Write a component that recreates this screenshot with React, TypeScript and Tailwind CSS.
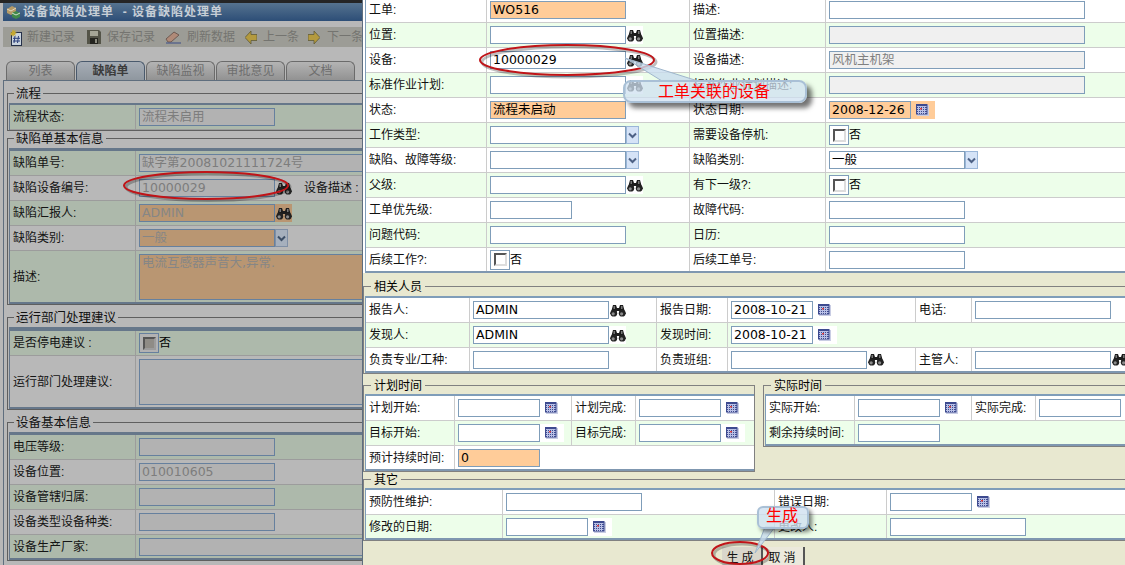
import React from "react";

const FONT = "font-['DejaVu_Sans','Noto_Sans_CJK_SC',sans-serif]";
const LABEL = "font-['Liberation_Sans','Noto_Sans_CJK_SC',sans-serif]";

const TONES: Record<string, string> = {
  white: "bg-white border-[#7f9db9] text-black",
  orange: "bg-[#ffcc99] border-[#7f9db9] text-black",
  disabled: "bg-[#f0f0f0] border-[#7f9db9] text-[#808080]",
  dim: "bg-[#b2b2b2] border-[#66809e] text-[#7d7d7d]",
  dimOrange: "bg-[#b99672] border-[#66809e] text-[#868686]",
};

function Box({ v = "", tone = "white", w = "w-[136px]" }: { v?: string; tone?: string; w?: string }) {
  return (
    <div className={`${w} h-[18px] shrink-0 border px-[2px] overflow-hidden whitespace-nowrap text-[12.5px] leading-[16px] ${FONT} ${TONES[tone]}`}>
      {v}
    </div>
  );
}

function Binoc({ bg = "" }: { bg?: string }) {
  return (
    <div className={`w-[17px] h-[18px] shrink-0 flex items-center justify-center ${bg}`}>
      <svg width="16" height="13" viewBox="0 0 16 13">
        <path d="M3 1h3l1 3h2l1-3h3l1.5 5.5L16 10H9.5V7h-3v3H0l1.5-3.5z" fill="#1c1c1c" />
        <circle cx="3.8" cy="9.2" r="3.4" fill="#222" />
        <circle cx="12.2" cy="9.2" r="3.4" fill="#222" />
        <circle cx="3.2" cy="9.8" r="1.6" fill="#8a8a8a" />
        <circle cx="11.6" cy="9.8" r="1.6" fill="#8a8a8a" />
        <rect x="3.5" y="2" width="1.5" height="3" fill="#777" />
        <rect x="11" y="2" width="1.5" height="3" fill="#777" />
      </svg>
    </div>
  );
}

function Cal({ bg = "" }: { bg?: string }) {
  return (
    <div className={`w-[24px] h-[18px] shrink-0 pl-[5px] flex items-center ${bg}`}>
      <svg width="13" height="12" viewBox="0 0 13 12">
        <rect x="1" y="1" width="12" height="11" fill="#c9cde4" />
        <rect x="0" y="0" width="11.5" height="10.5" fill="#3d4a8f" />
        <path d="M1 2.5h9.5M1 4.5h9.5M1 6.5h9.5M1 8.5h9.5M2.5 2v8M4.5 2v8M6.5 2v8M8.5 2v8" stroke="#b9c0e6" strokeWidth="1" />
        <rect x="4" y="4" width="2" height="1.5" fill="#e04040" />
      </svg>
    </div>
  );
}

function Arrow({ dim = false }: { dim?: boolean }) {
  return (
    <div className={`w-[13px] h-[18px] shrink-0 border flex items-center justify-center ${dim ? "bg-[#a6b0bd] border-[#7f8fa5]" : "bg-[#d5e3f7] border-[#9ab6d8]"}`}>
      <svg width="9" height="7" viewBox="0 0 9 7">
        <path d="M1 1.5l3.5 3.5L8 1.5" fill="none" stroke={dim ? "#3d4f66" : "#4d6185"} strokeWidth="2" />
      </svg>
    </div>
  );
}

function Check({ dim = false }: { dim?: boolean }) {
  return (
    <div className="flex items-center">
      <div className={`w-[20px] h-[20px] border flex items-center justify-center ${dim ? "border-[#66809e] bg-[#b2b2b2]" : "border-[#7f9db9] bg-white"}`}>
        <div className={`w-[13px] h-[13px] border-2 border-t-[#555] border-l-[#555] ${dim ? "bg-[#8f8c86] border-r-[#9c9c9c] border-b-[#9c9c9c]" : "bg-white border-r-[#ddd] border-b-[#ddd]"}`} />
      </div>
      <span className="text-black">否</span>
    </div>
  );
}

function Row({ cols, tone, last, children }: { cols: string; tone: string; last?: string; children: React.ReactNode }) {
  return <div className={`grid ${cols} h-[25px] ${tone} ${last ?? "border-b border-[#cccccc]"}`}>{children}</div>;
}

function Lb({ t, dark = false }: { t: string; dark?: boolean }) {
  return (
    <div className={`flex items-center pl-[3px] border-r whitespace-nowrap overflow-hidden ${dark ? "border-[#9c9c9c]" : "border-[#cccccc]"}`}>
      {t}
    </div>
  );
}

function Val({ children, line = true, dark = false }: { children?: React.ReactNode; line?: boolean; dark?: boolean }) {
  return (
    <div className={`flex items-center pl-[3px] overflow-hidden ${line ? "border-r" : ""} ${dark ? "border-[#9c9c9c]" : "border-[#cccccc]"}`}>
      {children}
    </div>
  );
}

const W = "bg-white";
const G = "bg-[#edfeea]";
const TOP = "grid-cols-[121px_203px_136px_1fr]";
const PEOPLE = "grid-cols-[104px_187px_71px_188px_56px_1fr]";
const PLAN = "grid-cols-[89px_117px_64px_1fr]";
const OTHER = "grid-cols-[137px_272px_112px_1fr]";
const END = "border-b-2 border-[#7f97b0]";

const D1 = "bg-[#adb9ab]";
const D2 = "bg-[#b8b8b8]";
const LCOL = "grid-cols-[126px_1fr]";

function LRow({ t, tone, h = "h-[25px]", last, children }: { t: string; tone: string; h?: string; last?: boolean; children?: React.ReactNode }) {
  return (
    <div className={`grid ${LCOL} ${h} ${tone} ${last ? "border-b-2 border-[#66778a]" : "border-b border-[#9c9c9c]"}`}>
      <Lb t={t} dark />
      <Val dark line={false}>{children}</Val>
    </div>
  );
}

function LSet({ title, mt, tableTop, children }: { title: string; mt: string; tableTop: string; children: React.ReactNode }) {
  return (
    <fieldset className={`${mt} w-[385px] border border-[#5f5f5f] pl-[1px]`}>
      <legend className="ml-[5px] px-[2px] h-[14px] leading-[16px] text-[12.5px] text-[#111]">{title}</legend>
      <div className={`mt-[3px] border-l border-[#66778a] ${tableTop} border-t-[#66778a] bg-[#b8b8b8]`}>{children}</div>
    </fieldset>
  );
}

function RSet({ title, w, mt = "", tableMt = "mt-[2px]", children }: { title: string; w: string; mt?: string; tableMt?: string; children: React.ReactNode }) {
  return (
    <fieldset className={`${w} ${mt} shrink-0 border border-[#808080] pl-[1px]`}>
      <legend className="ml-[6px] px-[3px] h-[14px] leading-[16px] text-[12px] text-black">{title}</legend>
      <div className={`${tableMt} border-l border-t-2 border-[#7f9db9] bg-white`}>{children}</div>
    </fieldset>
  );
}

function Tab({ t, active }: { t: string; active?: boolean }) {
  return (
    <div
      className={`w-[69px] h-[19px] rounded-t-[6px] border border-b-0 flex items-center justify-center text-[12px] bg-gradient-to-b ${
        active ? "border-[#4a5a6d] from-[#a6adb6] to-[#8f979f] text-[#3c3c3c] font-bold" : "border-[#6b6b6b] from-[#b4b4b4] to-[#929292] text-[#6e6e6e]"
      }`}
    >
      {t}
    </div>
  );
}

function Tool({ w, t, children }: { w: string; t: string; children: React.ReactNode }) {
  return (
    <div className={`${w} flex items-center shrink-0 whitespace-nowrap text-[#747470] text-[12px]`}>
      {children}
      <span>{t}</span>
    </div>
  );
}

function Left() {
  return (
    <div className="w-[362px] h-[565px] shrink-0 overflow-hidden bg-[#b8b8b8] text-[12px] text-[#141414]">
      <div className="h-[3px] bg-[#252525]" />
      <div className="ml-[3px] h-[18px] flex items-center bg-gradient-to-b from-[#56738f] to-[#2d4e77] text-[#c6ced6] font-bold tracking-[1px] whitespace-pre">
        <div className="w-[20px] flex justify-center">
          <svg width="15" height="15" viewBox="0 0 15 15">
            <path d="M1 4l5-3 4 2v4l-5 3-4-2z" fill="#b59a66" />
            <path d="M6 8l4-2 4 2v4l-4 2-4-2z" fill="#3f8a4a" />
            <path d="M6 8l4 2 4-2" stroke="#cfe0cf" fill="none" />
            <path d="M1 4l4 2 5-3" stroke="#e0d8c0" fill="none" />
          </svg>
        </div>
        设备缺陷处理单  - 设备缺陷处理单
      </div>
      <div className="ml-[3px] mt-[6px] h-[20px] flex items-center bg-[#9c9c96] pl-[7px]">
        <Tool w="w-[77px]" t="新建记录">
          <div className="w-[17px]">
            <svg width="13" height="17" viewBox="0 0 13 17">
              <rect x="1.5" y="3.5" width="10" height="13" fill="#c9d3dd" stroke="#26314a" />
              <path d="M5 7l-1 7M8.5 7l-1 7M3 9.3h7M3 12h7" stroke="#2a3f7a" />
              <path d="M3 0l1 2 2-1-1 2 2 1-2 1 1 2-2-1-1 2-1-2-2 1 1-2-1-1 2-1z" fill="#c4a832" />
            </svg>
          </div>
        </Tool>
        <Tool w="w-[78px]" t="保存记录">
          <div className="w-[20px]">
            <svg width="14" height="14" viewBox="0 0 14 14">
              <path d="M0 0h12l2 2v12H0z" fill="#545448" />
              <rect x="3" y="1" width="8" height="5" fill="#a5a596" />
              <rect x="3" y="8" width="8" height="6" fill="#24241f" />
              <rect x="8" y="9" width="2" height="4" fill="#8c8c80" />
            </svg>
          </div>
        </Tool>
        <Tool w="w-[80px]" t="刷新数据">
          <div className="w-[22px]">
            <svg width="16" height="13" viewBox="0 0 16 13">
              <path d="M1 8l8-7 5 3-8 7H3z" fill="#b08a78" stroke="#6e5a52" />
              <path d="M1 12h15" stroke="#4a5a8a" strokeWidth="1.2" />
            </svg>
          </div>
        </Tool>
        <Tool w="w-[63px]" t="上一条">
          <div className="w-[18px]">
            <svg width="12" height="13" viewBox="0 0 12 13">
              <path d="M0 6.5L6 0v3.5h6v6H6V13z" fill="#b49a3e" stroke="#5f5a3a" strokeWidth="0.8" />
            </svg>
          </div>
        </Tool>
        <Tool w="w-[70px]" t="下一条">
          <div className="w-[19px]">
            <svg width="12" height="13" viewBox="0 0 12 13">
              <path d="M12 6.5L6 0v3.5H0v6h6V13z" fill="#b49a3e" stroke="#5f5a3a" strokeWidth="0.8" />
            </svg>
          </div>
        </Tool>
      </div>
      <div className="ml-[6px] mt-[14px] flex gap-px">
        <Tab t="列表" />
        <Tab t="缺陷单" active />
        <Tab t="缺陷监视" />
        <Tab t="审批意见" />
        <Tab t="文档" />
      </div>
      <div className="ml-[3px] border-t border-l border-[#5f6e7e] pl-[3px] pt-[5px] h-[485px]">
        <LSet title="流程" mt="" tableTop="border-t-2">
          <LRow t="流程状态:" tone={D1}>
            <Box v="流程未启用" tone="dim" />
          </LRow>
        </LSet>
        <LSet title="缺陷单基本信息" mt="" tableTop="border-t-[3px]">
          <LRow t="缺陷单号:" tone={D1}>
            <Box v="缺字第20081021111724号" tone="dim" w="w-[230px]" />
          </LRow>
          <div className={`grid ${LCOL} h-[25px] ${D2} border-b border-[#9c9c9c]`}>
            <Lb t="缺陷设备编号:" dark />
            <Val dark line={false}>
              <Box v="10000029" tone="dim" />
              <Binoc />
              <span className="ml-[12px] whitespace-nowrap">设备描述 :</span>
            </Val>
          </div>
          <LRow t="缺陷汇报人:" tone={D1}>
            <Box v="ADMIN" tone="dimOrange" />
            <Binoc bg="bg-[#b99672]" />
          </LRow>
          <LRow t="缺陷类别:" tone={D2}>
            <Box v="一般" tone="dimOrange" />
            <Arrow dim />
          </LRow>
          <LRow t="描述:" tone={D1} h="h-[53px]" last>
            <div className={`w-[240px] h-[46px] shrink-0 border px-[2px] text-[12.5px] leading-[16px] ${FONT} ${TONES.dimOrange}`}>
              电流互感器声音大,异常.
            </div>
          </LRow>
        </LSet>
        <LSet title="运行部门处理建议" mt="mt-[5px]" tableTop="border-t-4">
          <LRow t="是否停电建议 :" tone={D1}>
            <Check dim />
          </LRow>
          <LRow t="运行部门处理建议:" tone={D2} h="h-[53px]" last>
            <div className={`w-[240px] h-[46px] shrink-0 border ${TONES.dim}`} />
          </LRow>
        </LSet>
        <LSet title="设备基本信息" mt="mt-[5px]" tableTop="border-t-[3px]">
          <LRow t="电压等级:" tone={D1}>
            <Box tone="dim" />
          </LRow>
          <LRow t="设备位置:" tone={D2}>
            <Box v="010010605" tone="dim" />
          </LRow>
          <LRow t="设备管辖归属:" tone={D1}>
            <Box tone="dim" />
          </LRow>
          <LRow t="设备类型设备种类:" tone={D2}>
            <Box tone="dim" />
          </LRow>
          <LRow t="设备生产厂家:" tone={D1} last>
            <Box tone="dim" w="w-[240px]" />
          </LRow>
        </LSet>
      </div>
    </div>
  );
}

function Right() {
  return (
    <div className="flex-1 h-[565px] overflow-hidden bg-[#e8e8d0] text-[12px] text-[#111] border-l border-[#5f6e7e]">
      <div className="-mt-[2px] pl-[2px] bg-white">
        <div className="border-l border-[#7f9db9]">
          <Row cols={TOP} tone={W}>
            <Lb t="工单:" /><Val><Box v="WO516" tone="orange" /></Val>
            <Lb t="描述:" /><Val line={false}><Box w="w-[256px]" /></Val>
          </Row>
          <Row cols={TOP} tone={G}>
            <Lb t="位置:" /><Val><Box /><Binoc bg="bg-white" /></Val>
            <Lb t="位置描述:" /><Val line={false}><Box w="w-[256px]" tone="disabled" /></Val>
          </Row>
          <Row cols={TOP} tone={W}>
            <Lb t="设备:" /><Val><Box v="10000029" /><Binoc /></Val>
            <Lb t="设备描述:" /><Val line={false}><Box v="风机主机架" w="w-[256px]" tone="disabled" /></Val>
          </Row>
          <Row cols={TOP} tone={G}>
            <Lb t="标准作业计划:" /><Val><Box /><Binoc bg="bg-white" /></Val>
            <Lb t="标准作业计划描述:" /><Val line={false}><Box w="w-[256px]" tone="disabled" /></Val>
          </Row>
          <Row cols={TOP} tone={W}>
            <Lb t="状态:" /><Val><Box v="流程未启动" tone="orange" /></Val>
            <Lb t="状态日期:" /><Val line={false}><Box v="2008-12-26" tone="orange" w="w-[82px]" /><Cal bg="bg-[#ffcc99]" /></Val>
          </Row>
          <Row cols={TOP} tone={G}>
            <Lb t="工作类型:" /><Val><Box /><Arrow /></Val>
            <Lb t="需要设备停机:" /><Val line={false}><Check /></Val>
          </Row>
          <Row cols={TOP} tone={W}>
            <Lb t="缺陷、故障等级:" /><Val><Box /><Arrow /></Val>
            <Lb t="缺陷类别:" /><Val line={false}><Box v="一般" /><Arrow /></Val>
          </Row>
          <Row cols={TOP} tone={G}>
            <Lb t="父级:" /><Val><Box /><Binoc bg="bg-white" /></Val>
            <Lb t="有下一级?:" /><Val line={false}><Check /></Val>
          </Row>
          <Row cols={TOP} tone={W}>
            <Lb t="工单优先级:" /><Val><Box w="w-[82px]" /></Val>
            <Lb t="故障代码:" /><Val line={false}><Box /></Val>
          </Row>
          <Row cols={TOP} tone={G}>
            <Lb t="问题代码:" /><Val><Box /></Val>
            <Lb t="日历:" /><Val line={false}><Box /></Val>
          </Row>
          <Row cols={TOP} tone={W} last={END}>
            <Lb t="后续工作?:" /><Val><Check /></Val>
            <Lb t="后续工单号:" /><Val line={false}><Box /></Val>
          </Row>
        </div>
      </div>
      <div>
        <RSet title="相关人员" w="w-[775px]" mt="mt-[6px]" tableMt="mt-[3px]">
          <Row cols={PEOPLE} tone={W}>
            <Lb t="报告人:" /><Val><Box v="ADMIN" /><Binoc /></Val>
            <Lb t="报告日期:" /><Val><Box v="2008-10-21" w="w-[82px]" /><Cal /></Val>
            <Lb t="电话:" /><Val line={false}><Box /></Val>
          </Row>
          <Row cols={PEOPLE} tone={G}>
            <Lb t="发现人:" /><Val><Box v="ADMIN" /><Binoc bg="bg-white" /></Val>
            <Lb t="发现时间:" /><Val line={false}><Box v="2008-10-21" w="w-[82px]" /><Cal bg="bg-white" /></Val>
            <div /><div />
          </Row>
          <Row cols={PEOPLE} tone={W} last={END}>
            <Lb t="负责专业/工种:" /><Val><Box /></Val>
            <Lb t="负责班组:" /><Val><Box /><Binoc /></Val>
            <Lb t="主管人:" /><Val line={false}><Box /><Binoc /></Val>
          </Row>
        </RSet>
        <div className="mt-[4px] flex items-start gap-[8px]">
          <RSet title="计划时间" w="w-[392px]">
            <Row cols={PLAN} tone={W}>
              <Lb t="计划开始:" /><Val><Box w="w-[82px]" /><Cal /></Val>
              <Lb t="计划完成:" /><Val line={false}><Box w="w-[82px]" /><Cal /></Val>
            </Row>
            <Row cols={PLAN} tone={G}>
              <Lb t="目标开始:" /><Val><Box w="w-[82px]" /><Cal bg="bg-white" /></Val>
              <Lb t="目标完成:" /><Val line={false}><Box w="w-[82px]" /><Cal bg="bg-white" /></Val>
            </Row>
            <Row cols={PLAN} tone={W} last={END}>
              <Lb t="预计持续时间:" /><Val line={false}><Box v="0" tone="orange" w="w-[82px]" /></Val>
              <div /><div />
            </Row>
          </RSet>
          <RSet title="实际时间" w="w-[370px]">
            <Row cols={PLAN} tone={W}>
              <Lb t="实际开始:" /><Val><Box w="w-[82px]" /><Cal /></Val>
              <Lb t="实际完成:" /><Val line={false}><Box w="w-[82px]" /></Val>
            </Row>
            <Row cols={PLAN} tone={G} last={END}>
              <Lb t="剩余持续时间:" /><Val line={false}><Box w="w-[82px]" /></Val>
              <div /><div />
            </Row>
          </RSet>
        </div>
        <RSet title="其它" w="w-[775px]">
          <Row cols={OTHER} tone={W}>
            <Lb t="预防性维护:" /><Val><Box /></Val>
            <Lb t="错误日期:" /><Val line={false}><Box w="w-[82px]" /><Cal /></Val>
          </Row>
          <Row cols={OTHER} tone={G} last={END}>
            <Lb t="修改的日期:" /><Val><Box w="w-[82px]" /><Cal bg="bg-white" /></Val>
            <Lb t="更改人:" /><Val line={false}><Box /></Val>
          </Row>
        </RSet>
        <div className="mt-[6px] ml-[359px] flex gap-px">
          <div className="w-[41px] h-[20px] bg-[#d9d6cb] border-r-2 border-[#555] text-center text-[12px] leading-[22px] tracking-[3px]">生成</div>
          <div className="w-[41px] h-[20px] bg-[#ebe9dc] border-r-2 border-[#555] text-center text-[12px] leading-[22px] tracking-[3px]">取消</div>
        </div>
      </div>
    </div>
  );
}

export default function App() {
  return (
    <div className={`relative w-[1125px] h-[565px] overflow-hidden flex ${LABEL}`}>
      <Left />
      <Right />
      <svg className="absolute inset-0 pointer-events-none" width="1125" height="565" viewBox="0 0 1125 565">
        <g fill="none" stroke="#000" strokeOpacity="0.25" strokeWidth="3">
          <ellipse cx="208" cy="187" rx="82" ry="13.5" />
          <ellipse cx="569" cy="62" rx="87" ry="15" />
          <ellipse cx="742" cy="555" rx="28" ry="11" />
        </g>
        <g fill="none" stroke="#c01418" strokeWidth="2">
          <ellipse cx="206" cy="185.5" rx="82" ry="13.5" />
          <ellipse cx="567" cy="60" rx="87" ry="15" />
          <ellipse cx="740" cy="553" rx="28" ry="11" />
        </g>
        <polygon points="625,58 662,81 698,81" fill="#c8dcee" fillOpacity="0.8" stroke="#9fb6cc" />
        <polygon points="755,553 765,527 775,527" fill="#c8dcee" fillOpacity="0.8" stroke="#9fb6cc" />
      </svg>
      <div className="absolute left-[623px] top-[80px] w-[184px] h-[23px] rounded-[8px] border-2 border-[#a9c0d6] bg-[#cfe0f0]/75 shadow-[5px_5px_5px_rgba(0,0,0,0.55)] text-[16px] leading-[19px] text-[#ff0000] pl-[33px] whitespace-nowrap">
        工单关联的设备
      </div>
      <div className="absolute left-[757px] top-[506px] w-[52px] h-[23px] rounded-[6px] border-2 border-[#a9c0d6] bg-[#cfe0f0]/80 shadow-[3px_3px_4px_rgba(0,0,0,0.5)] text-[16px] leading-[16px] text-[#ff0000] pl-[7px] whitespace-nowrap">
        生成
      </div>
    </div>
  );
}
